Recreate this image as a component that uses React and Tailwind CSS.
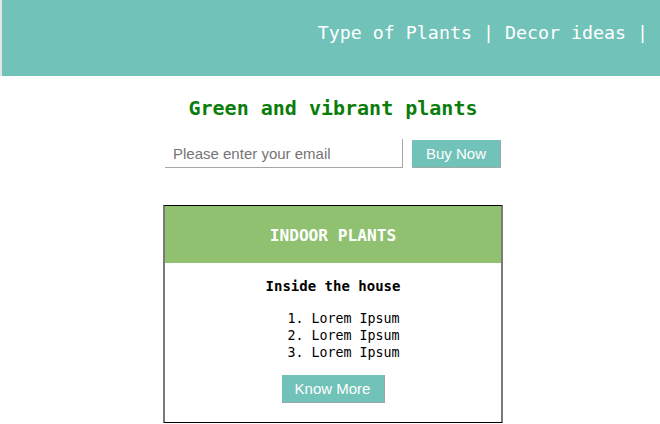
export default function App() {
  const mono = { fontFamily: '"DejaVu Sans Mono", monospace' };
  return (
    <div className="w-[660px] h-[424px] bg-white overflow-hidden" style={{ fontFamily: '"Liberation Sans", Arial, sans-serif' }}>
      <header className="h-[76px] border-l-2 border-[#e4e4e4] bg-[#71c2b8] flex justify-end pt-[23px] pr-[12px]">
        <div className="text-white text-[18.3px] leading-[20px] whitespace-pre" style={mono}>
          Type of Plants | Decor ideas |
        </div>
      </header>
      <main className="pl-[6px] flex flex-col items-center">
        <h1 className="mt-[20px] text-[20px] leading-[24px] font-bold text-[#0b7d0b]" style={mono}>
          Green and vibrant plants
        </h1>
        <div className="mt-[19px] flex items-start gap-[9px]">
          <input
            type="text"
            placeholder="Please enter your email"
            className="w-[238px] h-[29px] pl-[8px] text-[15px] text-black placeholder:text-[#757575] border-b border-r border-[#a6a6a6] outline-none bg-white"
          />
          <button className="mt-[1px] w-[89px] h-[28px] bg-[#71c2b8] text-white text-[15px] leading-[28px] border-b border-r border-[#9aaaa8]">
            Buy Now
          </button>
        </div>
        <section className="mt-[37px] w-[340px] border-y border-x-2 border-y-black border-x-[#7a7a7a] flex flex-col">
          <div className="h-[57px] pt-[3px] bg-[#8fc170] flex items-center justify-center">
            <span className="text-white font-bold text-[16.2px]" style={mono}>INDOOR PLANTS</span>
          </div>
          <div className="flex flex-col items-center pt-[15px] pb-[19px]">
            <h2 className="text-[14px] leading-[17px] font-bold text-black" style={mono}>Inside the house</h2>
            <ol className="mt-[15px] w-fit pl-[21px] text-[13.3px] leading-[17px] text-black" style={mono}>
              <li className="whitespace-pre">1. Lorem Ipsum</li>
              <li className="whitespace-pre">2. Lorem Ipsum</li>
              <li className="whitespace-pre">3. Lorem Ipsum</li>
            </ol>
            <button className="mt-[14px] w-[103px] h-[28px] bg-[#71c2b8] text-white text-[15px] leading-[28px] border-b border-r border-[#9aaaa8]">
              Know More
            </button>
          </div>
        </section>
      </main>
    </div>
  );
}
